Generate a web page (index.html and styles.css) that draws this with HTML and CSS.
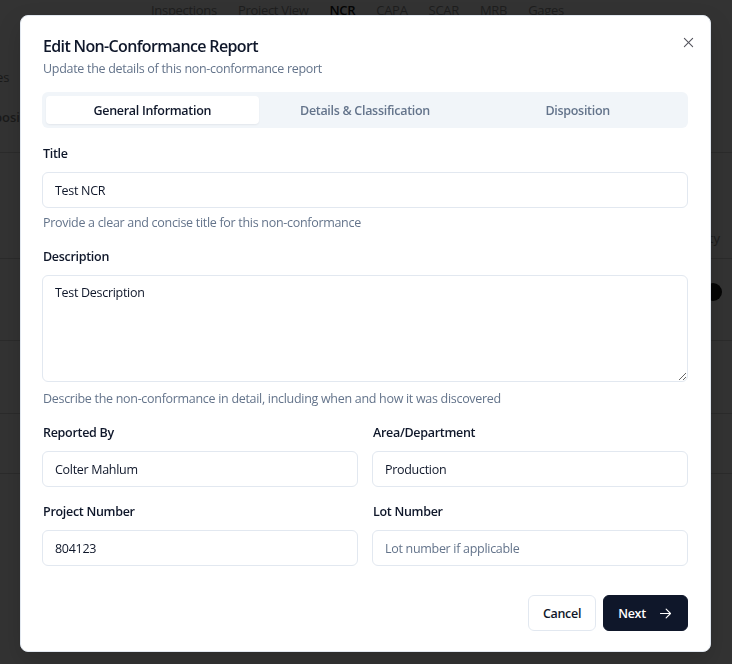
FILE: index.html
```html
<!DOCTYPE html>
<html lang="en">
<head>
<meta charset="utf-8">
<title>Edit Non-Conformance Report</title>
<link rel="stylesheet" href="styles.css">
</head>
<body>
<div class="page">
  <nav class="topnav">
    <span>Inspections</span><span>Project View</span><span class="current">NCR</span><span>CAPA</span><span>SCAR</span><span>MRB</span><span>Gages</span>
  </nav>
  <div class="bg-left">
    <div class="bg-word one">es</div>
    <div class="bg-word two">posi</div>
  </div>
  <div class="bg-rows">
    <div class="bg-row r1"><span class="bg-ty">ty</span></div>
    <div class="bg-row r2"><span class="bg-dot"></span></div>
    <div class="bg-row r3"></div>
    <div class="bg-row r4"></div>
    <div class="bg-row r5"></div>
  </div>
</div>

<div class="overlay">
  <div class="modal">
    <button class="close" aria-label="Close">
      <svg width="11" height="11" viewBox="0 0 12 12" fill="none" stroke="currentColor" stroke-width="1.2" stroke-linecap="round"><path d="M1.5 1.5 10.5 10.5"/><path d="M10.5 1.5 1.5 10.5"/></svg>
    </button>
    <header class="modal-head">
      <h2 class="modal-title">Edit Non-Conformance Report</h2>
      <p class="modal-sub">Update the details of this non-conformance report</p>
    </header>

    <div class="tabs">
      <div class="tab active">General Information</div>
      <div class="tab">Details &amp; Classification</div>
      <div class="tab">Disposition</div>
    </div>

    <form class="form">
      <div class="field">
        <label class="label">Title</label>
        <input class="input" type="text" value="Test NCR">
        <p class="help">Provide a clear and concise title for this non-conformance</p>
      </div>
      <div class="field">
        <label class="label">Description</label>
        <textarea class="input textarea">Test Description</textarea>
        <p class="help help-2">Describe the non-conformance in detail, including when and how it was discovered</p>
      </div>
      <div class="grid">
        <div class="field">
          <label class="label">Reported By</label>
          <input class="input" type="text" value="Colter Mahlum">
        </div>
        <div class="field">
          <label class="label">Area/Department</label>
          <input class="input" type="text" value="Production">
        </div>
        <div class="field">
          <label class="label">Project Number</label>
          <input class="input" type="text" value="804123">
        </div>
        <div class="field">
          <label class="label">Lot Number</label>
          <input class="input" type="text" placeholder="Lot number if applicable">
        </div>
      </div>
      <div class="actions">
        <button type="button" class="btn btn-outline">Cancel</button>
        <button type="button" class="btn btn-primary">Next
          <svg width="15" height="15" viewBox="0 0 24 24" fill="none" stroke="currentColor" stroke-width="1.8" stroke-linecap="round" stroke-linejoin="round"><path d="M4 12h16"/><path d="m13 5 7 7-7 7"/></svg>
        </button>
      </div>
    </form>
  </div>
</div>
</body>
</html>
```
FILE: styles.css
```css
* { box-sizing: border-box; }
html, body { margin: 0; padding: 0; }
body {
  width: 732px;
  height: 664px;
  overflow: hidden;
  background: #333333;
  font-family: "Open Sans", "Noto Sans", sans-serif;
  color: #0f172a;
}

/* dimmed background page */
.page { height: 664px; }
.topnav {
  display: flex;
  gap: 21px;
  padding-left: 151px;
  height: 20px;
  align-items: center;
  font-size: 13px;
  color: #1e1e1e;
  letter-spacing: -0.3px;
}
.topnav .current { color: #050505; font-weight: 600; }
.bg-left { position: absolute; left: 0; top: 60px; }
.bg-word { font-size: 13px; color: #1a1a1a; }
.bg-word.one { margin-top: 8px; margin-left: -4px; }
.bg-word.two { margin-top: 22px; margin-left: -6px; font-weight: 600; }
.bg-rows { padding-top: 132px; }
.bg-row { border-top: 1px solid #2b2b2b; }
.bg-row.r1 { height: 106px; position: relative; }
.bg-row.r2 { height: 82px; position: relative; }
.bg-row.r3 { height: 73px; }
.bg-row.r4 { height: 60px; }
.bg-row.r5 { height: 150px; }
.bg-ty { position: absolute; right: 12px; top: 76px; font-size: 13px; color: #1c1c1c; }
.bg-dot { position: absolute; right: 10px; top: 24px; width: 18px; height: 18px; border-radius: 50%; background: #050505; }

/* overlay + modal */
.overlay {
  position: fixed;
  inset: 0;
  display: flex;
  align-items: center;
  justify-content: center;
}
.modal {
  position: relative;
  width: 691px;
  height: 637px;
  margin-top: 3px;
  margin-left: -1px;
  background: #ffffff;
  border: 1px solid #e2e8f0;
  border-radius: 8px;
  padding: 18px 22px 20px 21px;
  box-shadow: 0 10px 25px rgba(0,0,0,0.15);
}
.close {
  position: absolute;
  top: 18px;
  right: 14px;
  width: 16px;
  height: 16px;
  padding: 0;
  border: 0;
  background: none;
  color: #52525b;
  display: flex;
  align-items: center;
  justify-content: center;
}
.modal-head { padding-left: 1px; }
.modal-title {
  margin: 0;
  font-size: 16px;
  line-height: 24px;
  font-weight: 600;
  letter-spacing: -0.65px;
  color: #0f172a;
}
.modal-sub {
  margin: 2px 0 0;
  font-size: 12.5px;
  line-height: 18px;
  color: #64748b;
  letter-spacing: -0.3px;
}

.tabs {
  margin-top: 14px;
  height: 36px;
  background: #f1f5f9;
  border-radius: 6px;
  padding: 4px;
  display: grid;
  grid-template-columns: 1fr 1fr 1fr;
}
.tab {
  display: flex;
  align-items: center;
  justify-content: center;
  border-radius: 4px;
  font-size: 12.5px;
  font-weight: 600;
  color: #64748b;
  letter-spacing: -0.3px;
}
.tab.active {
  background: #ffffff;
  color: #0f172a;
  box-shadow: 0 1px 2px rgba(15,23,42,0.06);
}

.form {
  margin-top: 17px;
  display: flex;
  flex-direction: column;
  gap: 16px;
}
.field { display: flex; flex-direction: column; }
.label {
  font-size: 12.5px;
  line-height: 18px;
  font-weight: 600;
  color: #0f172a;
  letter-spacing: -0.3px;
  margin-bottom: 9px;
  padding-left: 1px;
}
.input {
  height: 36px;
  width: 100%;
  border: 1px solid #e2e8f0;
  border-radius: 6px;
  padding: 0 12px;
  font-family: inherit;
  font-size: 12.5px;
  letter-spacing: -0.3px;
  color: #0f172a;
  background: #ffffff;
  outline: none;
}
.input::placeholder { color: #64748b; }
.textarea {
  height: 107px;
  padding: 8px 12px;
  line-height: 18px;
  resize: vertical;
}
.help {
  margin: 6px 0 0;
  padding-left: 1px;
  font-size: 12.5px;
  line-height: 18px;
  color: #64748b;
  letter-spacing: -0.3px;
}
.help-2 { margin-top: 8px; }
.grid {
  display: grid;
  grid-template-columns: 1fr 1fr;
  column-gap: 14px;
  row-gap: 16px;
}
.actions {
  margin-top: 13px;
  display: flex;
  justify-content: flex-end;
  gap: 7px;
}
.btn {
  height: 36px;
  border-radius: 6px;
  font-family: inherit;
  font-size: 12.5px;
  font-weight: 600;
  letter-spacing: -0.3px;
  display: flex;
  align-items: center;
  justify-content: center;
}
.btn-outline {
  width: 68px;
  background: #ffffff;
  border: 1px solid #e2e8f0;
  color: #0f172a;
}
.btn-primary {
  width: 85px;
  background: #0f172a;
  border: 1px solid #0f172a;
  color: #ffffff;
  gap: 12px;
}
```
